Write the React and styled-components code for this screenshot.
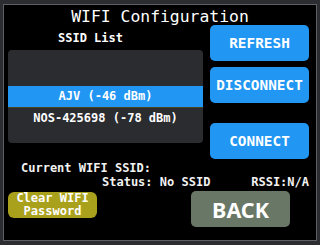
import React from 'react'
import styled, { createGlobalStyle } from 'styled-components'

const GlobalStyle = createGlobalStyle`
  html, body {
    margin: 0;
    padding: 0;
    background: #2b2d30;
  }
  body {
    width: 320px;
    height: 245px;
    overflow: hidden;
    font-family: "DejaVu Sans Mono", "Liberation Mono", monospace;
    color: #ffffff;
  }
`

const Screen = styled.div`
  box-sizing: border-box;
  width: 314px;
  height: 237px;
  margin: 4px 0 0 3px;
  border: 1px solid #5d6064;
  background: #000000;
  display: flex;
  flex-direction: column;
  padding: 0 7px 0 4px;
`

const Title = styled.div`
  height: 20px;
  line-height: 24px;
  font-size: 16.4px;
  text-align: center;
  margin-right: -3px;
  white-space: nowrap;
`

const Body = styled.div`
  display: grid;
  grid-template-columns: 195px 99px;
  column-gap: 7px;
  height: 134px;
`

const LeftCol = styled.div`
  display: flex;
  flex-direction: column;
`

const ListLabel = styled.div`
  margin-top: 5px;
  height: 16px;
  line-height: 16px;
  font-size: 12px;
  font-weight: bold;
  text-align: center;
  margin-right: 30px;
`

const SsidList = styled.div`
  margin-top: 4px;
  height: 93px;
  background: #2a2c2f;
  border-radius: 4px;
  padding-top: 36px;
  box-sizing: border-box;
  overflow: hidden;
`

const SsidRow = styled.div`
  height: 21px;
  line-height: 21px;
  font-size: 12px;
  font-weight: bold;
  text-align: center;
  white-space: nowrap;
  background: ${p => (p.$selected ? '#2196f3' : 'transparent')};
  border-bottom: 1px solid ${p => (p.$selected ? '#4d4220' : 'transparent')};
`

const RightCol = styled.div`
  display: flex;
  flex-direction: column;
`

const ActionButton = styled.div`
  height: 36px;
  margin-top: ${p => p.$gap || 0}px;
  border-radius: 5px;
  background: #2196f3;
  display: flex;
  align-items: center;
  justify-content: center;
  font-size: 14.4px;
  font-weight: bold;
  white-space: nowrap;
`

const Status = styled.div`
  margin-top: 2px;
  font-size: 12px;
  font-weight: bold;
  line-height: 14px;
  color: #f2f2f2;
`

const StatusLine = styled.div`
  display: flex;
  justify-content: space-between;
  padding-left: ${p => p.$indent}px;
  white-space: nowrap;
`

const Footer = styled.div`
  margin-top: 2px;
  display: flex;
  align-items: flex-start;
`

const ClearButton = styled.div`
  margin-top: 1px;
  width: 89px;
  height: 26px;
  border-radius: 6px;
  background: #a9a11c;
  display: flex;
  flex-direction: column;
  align-items: center;
  justify-content: center;
  font-size: 12px;
  font-weight: bold;
  line-height: 13px;
`

const BackButton = styled.div`
  margin-left: 94px;
  width: 99px;
  height: 36px;
  border-radius: 5px;
  background: #697866;
  display: flex;
  align-items: center;
  justify-content: center;
  font-family: "Noto Sans", "Open Sans", sans-serif;
  font-size: 21.5px;
  font-weight: bold;
`

export default function App() {
  return (
    <>
      <GlobalStyle />
      <Screen>
        <Title>WIFI Configuration</Title>
        <Body>
          <LeftCol>
            <ListLabel>SSID List</ListLabel>
            <SsidList>
              <SsidRow $selected>AJV (-46 dBm)</SsidRow>
              <SsidRow>NOS-425698 (-78 dBm)</SsidRow>
            </SsidList>
          </LeftCol>
          <RightCol>
            <ActionButton>REFRESH</ActionButton>
            <ActionButton $gap={6}>DISCONNECT</ActionButton>
            <ActionButton $gap={20}>CONNECT</ActionButton>
          </RightCol>
        </Body>
        <Status>
          <StatusLine $indent={13}>Current WIFI SSID:</StatusLine>
          <StatusLine $indent={94}>
            <span>Status: No SSID</span>
            <span>RSSI:N/A</span>
          </StatusLine>
        </Status>
        <Footer>
          <ClearButton>
            <span>Clear WIFI</span>
            <span>Password</span>
          </ClearButton>
          <BackButton>BACK</BackButton>
        </Footer>
      </Screen>
    </>
  )
}
